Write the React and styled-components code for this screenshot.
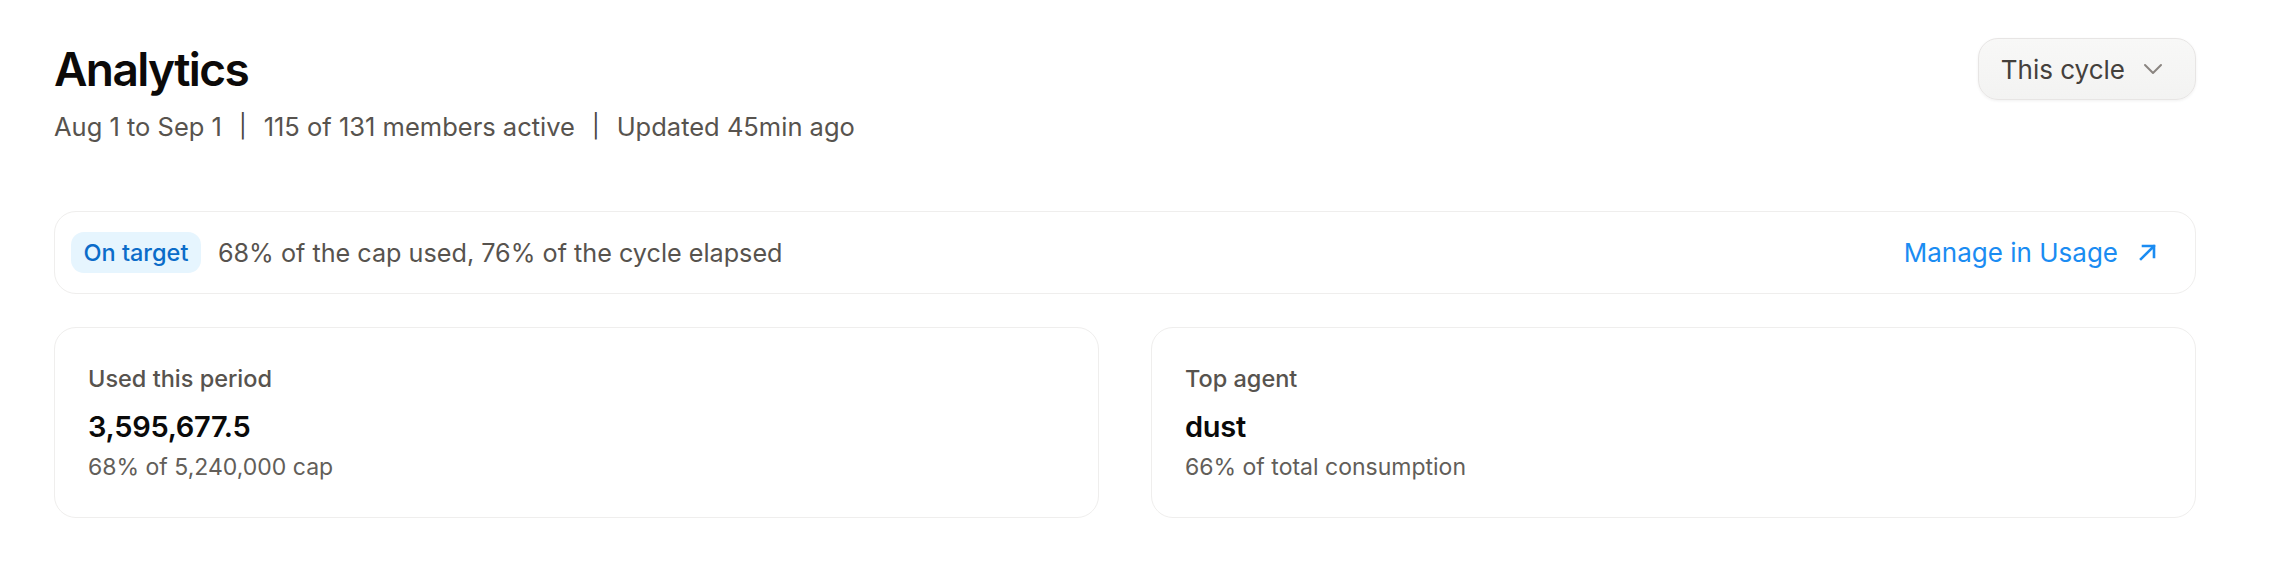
import React from "react";
import styled, { createGlobalStyle } from "styled-components";

const Global = createGlobalStyle`
  html, body { margin: 0; padding: 0; background: #ffffff; }
  body { font-family: Inter, "Noto Sans", sans-serif; -webkit-font-smoothing: antialiased; }
  * { box-sizing: border-box; }
`;

const Page = styled.main`
  padding: 38px 74px 0 54px;
`;

const Header = styled.header`
  display: flex;
  justify-content: space-between;
  align-items: flex-start;
`;

const TitleBlock = styled.div`
  display: flex;
  flex-direction: column;
  padding-top: 3px;
`;

const Title = styled.h1`
  margin: 0;
  font-size: 46px;
  line-height: 56px;
  font-weight: 600;
  letter-spacing: -0.035em;
  color: #0c0a09;
`;

const Meta = styled.div`
  display: flex;
  align-items: center;
  gap: 17px;
  margin-top: 12px;
  font-size: 25.5px;
  line-height: 35px;
  color: #57534e;
`;

const Pipe = styled.span`
  color: #4a4642;
  font-size: 23px;
`;

const CycleButton = styled.button`
  display: flex;
  align-items: center;
  gap: 18px;
  height: 62px;
  padding: 0 32px 0 22px;
  border: 1.5px solid #e7e5e4;
  border-radius: 20px;
  background: linear-gradient(#f8f8f7, #f3f3f2);
  box-shadow: 0 1px 3px rgba(0, 0, 0, 0.06);
  font-family: inherit;
  font-size: 26px;
  color: #44403c;
  cursor: pointer;
`;

const Banner = styled.section`
  display: flex;
  align-items: center;
  justify-content: space-between;
  margin-top: 67px;
  height: 83px;
  padding: 0 38px 0 16px;
  border: 1.5px solid #efeeed;
  border-radius: 22px;
`;

const BannerLeft = styled.div`
  display: flex;
  align-items: center;
  gap: 17px;
`;

const Badge = styled.span`
  display: inline-flex;
  align-items: center;
  height: 41px;
  padding: 0 12.5px;
  border-radius: 13px;
  background: #e6f5fe;
  color: #0b6cc9;
  font-size: 23.5px;
  font-weight: 450;
`;

const BannerText = styled.span`
  font-size: 25.2px;
  color: #57534e;
`;

const ManageLink = styled.a`
  display: flex;
  align-items: center;
  gap: 20px;
  font-size: 26px;
  color: #1b8cf2;
  text-decoration: none;
  cursor: pointer;
`;

const Cards = styled.div`
  display: grid;
  grid-template-columns: 1fr 1fr;
  gap: 52px;
  margin-top: 33px;
`;

const Card = styled.article`
  height: 191px;
  padding: 36px 33px 0;
  border: 1.5px solid #efeeed;
  border-radius: 22px;
  display: flex;
  flex-direction: column;
`;

const CardLabel = styled.div`
  font-size: 23.5px;
  line-height: 30px;
  font-weight: 500;
  color: #57534e;
`;

const CardValue = styled.div`
  margin-top: 15px;
  font-size: 29px;
  line-height: 36px;
  font-weight: 600;
  color: #0a0a0a;
  letter-spacing: -0.01em;
`;

const CardSub = styled.div`
  margin-top: 7px;
  font-size: 23px;
  line-height: 30px;
  color: #625e59;
`;

const Chevron = () => (
  <svg width="20" height="12" viewBox="0 0 20 12" fill="none">
    <path d="M2 2l8 8 8-8" stroke="#8a8580" strokeWidth="2" strokeLinecap="round" strokeLinejoin="round" />
  </svg>
);

const ArrowUpRight = () => (
  <svg width="19" height="19" viewBox="0 0 19 19" fill="none">
    <path d="M5 3h11v11M16 3L3 16" stroke="#1b8cf2" strokeWidth="2.6" strokeLinecap="square" />
  </svg>
);

const stats = [
  { label: "Used this period", value: "3,595,677.5", sub: "68% of 5,240,000 cap" },
  { label: "Top agent", value: "dust", sub: "66% of total consumption" },
];

export default function App() {
  return (
    <>
      <Global />
      <Page>
        <Header>
          <TitleBlock>
            <Title>Analytics</Title>
            <Meta>
              <span>Aug 1 to Sep 1</span>
              <Pipe>|</Pipe>
              <span>115 of 131 members active</span>
              <Pipe>|</Pipe>
              <span>Updated 45min ago</span>
            </Meta>
          </TitleBlock>
          <CycleButton>
            This cycle
            <Chevron />
          </CycleButton>
        </Header>

        <Banner>
          <BannerLeft>
            <Badge>On target</Badge>
            <BannerText>68% of the cap used, 76% of the cycle elapsed</BannerText>
          </BannerLeft>
          <ManageLink>
            Manage in Usage
            <ArrowUpRight />
          </ManageLink>
        </Banner>

        <Cards>
          {stats.map((s) => (
            <Card key={s.label}>
              <CardLabel>{s.label}</CardLabel>
              <CardValue>{s.value}</CardValue>
              <CardSub>{s.sub}</CardSub>
            </Card>
          ))}
        </Cards>
      </Page>
    </>
  );
}
